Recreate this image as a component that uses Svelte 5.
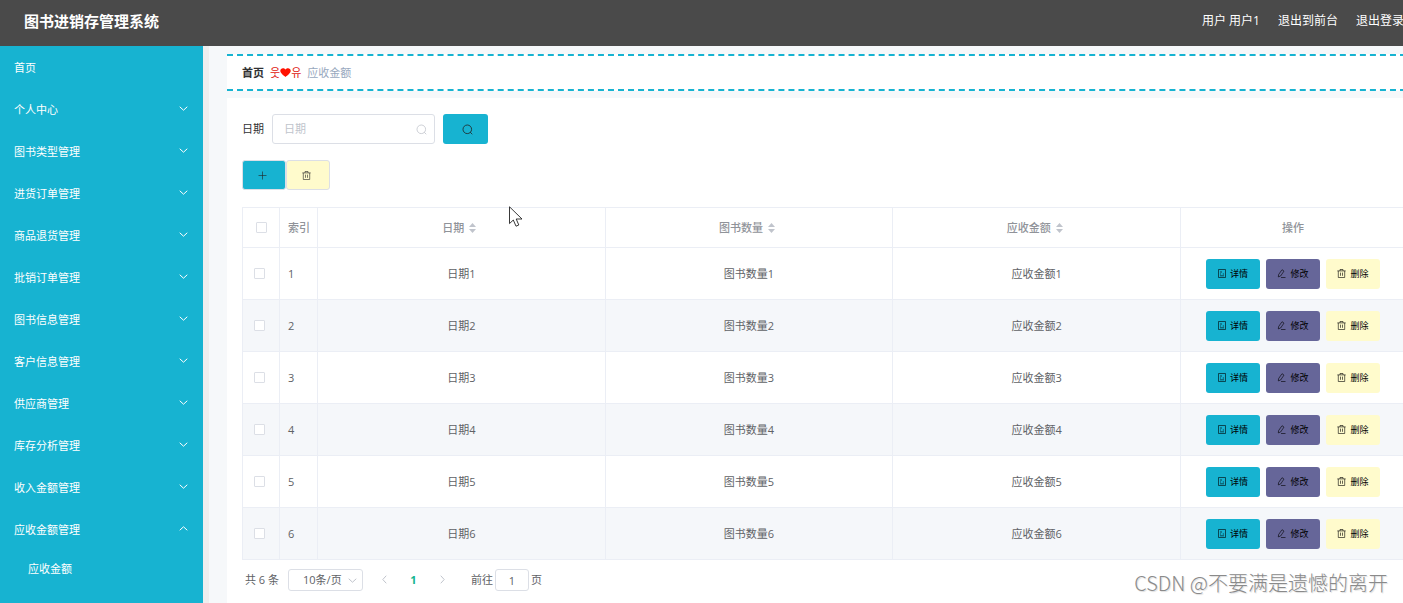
<script>
	const menus = [
		{ name: '首页' },
		{ name: '个人中心', children: [] },
		{ name: '图书类型管理', children: [] },
		{ name: '进货订单管理', children: [] },
		{ name: '商品退货管理', children: [] },
		{ name: '批销订单管理', children: [] },
		{ name: '图书信息管理', children: [] },
		{ name: '客户信息管理', children: [] },
		{ name: '供应商管理', children: [] },
		{ name: '库存分析管理', children: [] },
		{ name: '收入金额管理', children: [] },
		{ name: '应收金额管理', children: ['应收金额'] }
	];
	const columns = ['日期', '图书数量', '应收金额'];
	const rows = [1, 2, 3, 4, 5, 6];

	let opened = $state('应收金额管理');
	let keyword = $state('');
	let selected = $state([]);
	let page = $state('1');

	const toggleMenu = (name) => {
		opened = opened === name ? '' : name;
	};

	const toggleAll = (e) => {
		selected = e.currentTarget.checked ? [...rows] : [];
	};
</script>

{#snippet chevron(dir)}
	<svg class="chevron {dir}" width="9" height="9" viewBox="0 0 9 9" fill="none" aria-hidden="true">
		<path d="M1 3L4.5 6.2L8 3" stroke="currentColor" stroke-linecap="round" />
	</svg>
{/snippet}

{#snippet searchIcon()}
	<svg width="11" height="11" viewBox="0 0 11 11" fill="none" stroke="currentColor" aria-hidden="true">
		<circle cx="5.3" cy="5.3" r="4.3" stroke-width="0.8" />
		<path d="M8.4 8.4L10 10" stroke-width="0.8" stroke-linecap="round" />
	</svg>
{/snippet}

{#snippet trashIcon()}
	<svg width="9" height="9" viewBox="0 0 9 9" fill="none" stroke="currentColor" stroke-width="0.6" aria-hidden="true">
		<path d="M0.3 1.9H8.7M3 1.9V0.5H6V1.9M1.3 1.9V8.5H7.7V1.9M3.5 3.6V6.8M5.5 3.6V6.8" />
	</svg>
{/snippet}

<div class="app">
	<header>
		<h1>图书进销存管理系统</h1>
		<nav class="user">
			<span>用户 用户1</span>
			<a href="#front">退出到前台</a>
			<a href="#logout">退出登录</a>
		</nav>
	</header>

	<div class="body">
		<aside>
			<ul>
				{#each menus as menu}
					<li>
						<button class="menu" onclick={() => toggleMenu(menu.name)}>
							{menu.name}
							{#if menu.children}
								{@render chevron(opened === menu.name ? 'up' : 'down')}
							{/if}
						</button>
						{#if opened === menu.name && menu.children}
							{#each menu.children as child}
								<a class="child" href="#list">{child}</a>
							{/each}
						{/if}
					</li>
				{/each}
			</ul>
		</aside>

		<main>
			<div class="breadcrumb">
				<a href="#home">首页</a>
				<span class="separator">웃<svg width="11" height="9" viewBox="0 0 11 9" aria-hidden="true"><path d="M5.5 9C3.6 7.2 0.3 5.2 0.3 2.7C0.3 0 4 -0.8 5.5 1.6C7 -0.8 10.7 0 10.7 2.7C10.7 5.2 7.4 7.2 5.5 9Z" fill="#f10" /></svg>유</span>
				<span class="current">应收金额</span>
			</div>

			<section class="panel">
				<form class="search" onsubmit={(e) => e.preventDefault()}>
					<label for="date">日期</label>
					<div class="input">
						<input id="date" type="text" placeholder="日期" bind:value={keyword} />
						{@render searchIcon()}
					</div>
					<button class="btn primary" aria-label="查询">{@render searchIcon()}</button>
				</form>

				<div class="tools">
					<button class="btn primary" aria-label="新增">
						<svg width="9" height="9" viewBox="0 0 9 9" stroke="currentColor" stroke-width="0.6" aria-hidden="true">
							<path d="M4.5 0.5V8.5M0.5 4.5H8.5" />
						</svg>
					</button>
					<button class="btn danger" aria-label="删除">{@render trashIcon()}</button>
				</div>

				<table>
					<colgroup>
						<col class="w-check" />
						<col class="w-index" />
						<col />
						<col />
						<col />
						<col class="w-action" />
					</colgroup>
					<thead>
						<tr>
							<th>
								<input type="checkbox" aria-label="全选" checked={selected.length === rows.length} onchange={toggleAll} />
							</th>
							<th class="index">索引</th>
							{#each columns as column}
								<th>
									<span class="sortable">
										{column}
										<svg width="7" height="10" viewBox="0 0 7 10" fill="#c0c4cc" aria-hidden="true">
											<path d="M3.5 0L7 4H0ZM3.5 10L7 6H0Z" />
										</svg>
									</span>
								</th>
							{/each}
							<th>操作</th>
						</tr>
					</thead>
					<tbody>
						{#each rows as row}
							<tr>
								<td class="check"><input type="checkbox" aria-label="选择{row}" value={row} bind:group={selected} /></td>
								<td class="index">{row}</td>
								{#each columns as column}
									<td>{column}{row}</td>
								{/each}
								<td>
									<div class="actions">
										<button class="btn small primary">
											<svg width="8" height="9" viewBox="0 0 8 9" fill="none" stroke="currentColor" stroke-width="0.6" aria-hidden="true">
												<path d="M0.5 0.5H7.5V8.5H0.5ZM2 3H4M2 5H3M4.8 5H6M2 6.8H6" />
											</svg>
											详情
										</button>
										<button class="btn small edit">
											<svg width="9" height="9" viewBox="0 0 9 9" fill="none" stroke="currentColor" stroke-width="0.6" aria-hidden="true">
												<path d="M1.6 5.6L5 0.7L7 2.1L3.6 7L1.3 7.9ZM4 8.5H8.5" />
											</svg>
											修改
										</button>
										<button class="btn small danger">{@render trashIcon()}删除</button>
									</div>
								</td>
							</tr>
						{/each}
					</tbody>
				</table>

				<div class="pagination">
					<span>共 6 条</span>
					<div class="size">
						<select aria-label="每页条数">
							<option>10条/页</option>
							<option>20条/页</option>
						</select>
						{@render chevron('down')}
					</div>
					<button class="pager" aria-label="上一页" disabled>{@render chevron('left')}</button>
					<button class="pager active">1</button>
					<button class="pager" aria-label="下一页" disabled>{@render chevron('right')}</button>
					<label class="jump">前往<input type="text" bind:value={page} />页</label>
				</div>
			</section>
		</main>
	</div>

	<div class="watermark">CSDN @不要满是遗憾的离开</div>
	<svg class="cursor" width="14" height="21" viewBox="0 0 14 21" aria-hidden="true">
		<path d="M0.5 0.8V17.6L4.3 14L7 20.2L9.8 19L7.2 13H13Z" fill="#fff" stroke="#222" stroke-width="0.9" />
	</svg>
</div>

<style>
	:global(body) {
		margin: 0;
		overflow: hidden;
	}

	.app {
		position: relative;
		display: flex;
		flex-direction: column;
		min-height: 100vh;
		overflow: hidden;
		color: #606266;
		background: #f6f8fa;
		font-family: 'Open Sans', 'Noto Sans CJK SC', 'Noto Sans CJK KR', sans-serif;
		font-size: 11px;
		line-height: 16px;
	}

	.app * {
		box-sizing: border-box;
	}

	button,
	input,
	select {
		font: inherit;
		color: inherit;
	}

	button {
		padding: 0;
		border: 0;
		background: none;
		cursor: pointer;
	}

	a {
		color: inherit;
		text-decoration: none;
	}

	svg {
		flex: none;
	}

	header {
		display: flex;
		align-items: center;
		justify-content: space-between;
		height: 46px;
		padding: 0 0 4px 24px;
		color: #fff;
		background: #4a4a4a;
	}

	h1 {
		margin: 0;
		font-size: 15px;
		line-height: 24px;
	}

	.user {
		display: flex;
		gap: 18px;
		margin-right: -1px;
		font-size: 12px;
		white-space: nowrap;
	}

	.body {
		display: flex;
		flex: 1;
	}

	aside {
		flex: none;
		width: 203px;
		color: #fff;
		background: #17b3d1;
	}

	ul {
		margin: 0;
		padding: 1px 0 0;
		list-style: none;
	}

	.menu {
		display: flex;
		align-items: center;
		justify-content: space-between;
		width: 100%;
		height: 42px;
		padding: 0 15px 0 14px;
	}

	.menu .chevron {
		margin-bottom: 4px;
	}

	.child {
		display: flex;
		align-items: center;
		height: 36px;
		padding-left: 28px;
	}

	.up {
		transform: rotate(180deg);
	}

	.left {
		transform: rotate(90deg);
	}

	.right {
		transform: rotate(-90deg);
	}

	main {
		display: flex;
		flex: 1;
		flex-direction: column;
		gap: 7px;
		min-width: 0;
		margin-right: -3px;
		padding: 8px 0 0 18px;
		border-left: 6px solid #eee;
	}

	.breadcrumb {
		display: flex;
		align-items: center;
		gap: 6px;
		height: 37px;
		padding: 0 15px;
		border: dashed #17b3d1;
		border-width: 2px 0;
		background: #fff;
	}

	.breadcrumb a {
		color: #303133;
		font-weight: bold;
	}

	.separator {
		display: flex;
		align-items: center;
		color: #e02010;
	}

	.current {
		color: #97a8be;
	}

	.panel {
		flex: 1;
		padding: 16px 0 12px 15px;
		background: #fff;
	}

	.search {
		display: flex;
		align-items: center;
		gap: 8px;
		color: #303133;
	}

	.input {
		display: flex;
		align-items: center;
		width: 163px;
		height: 30px;
		padding: 0 7px 0 11px;
		border: 1px solid #dcdfe6;
		border-radius: 3px;
		color: #c0c4cc;
	}

	.input input {
		flex: 1;
		min-width: 0;
		padding: 0;
		border: 0;
		outline: none;
		color: #606266;
	}

	input::placeholder {
		color: #c0c4cc;
	}

	.btn {
		display: flex;
		align-items: center;
		justify-content: center;
		width: 44px;
		height: 30px;
		border-radius: 3px;
		color: #222;
	}

	.search .btn {
		width: 45px;
		padding-left: 3px;
	}

	.tools {
		display: flex;
		margin: 16px 0 17px;
	}

	.tools .btn {
		padding-right: 4px;
		border: 1px solid #dcdfe6;
	}

	.primary {
		background: #17b3d1;
	}

	.edit {
		background: #666699;
	}

	.danger {
		background: #fffbcc;
	}

	.btn.small {
		gap: 4px;
		width: 54px;
		font-size: 9px;
		color: #000;
	}

	table {
		width: 100%;
		border: solid #ebeef5;
		border-width: 1px 0 0 1px;
		border-spacing: 0;
		table-layout: fixed;
	}

	.w-check {
		width: 37px;
	}

	.w-index {
		width: 38px;
	}

	.w-action {
		width: 225px;
	}

	th,
	td {
		padding: 0;
		border: solid #ebeef5;
		border-width: 0 1px 1px 0;
		text-align: center;
	}

	th {
		height: 40px;
		color: #909399;
		font-weight: 500;
	}

	td {
		height: 52px;
	}

	.check {
		padding-right: 3px;
	}

	.index {
		padding-left: 8px;
		text-align: left;
	}

	tbody tr:nth-child(even) {
		background: #f5f7fa;
	}

	input[type='checkbox'] {
		display: block;
		width: 11px;
		height: 11px;
		margin: 0 auto;
		appearance: none;
		border: 1px solid #dcdfe6;
		border-radius: 1px;
		background: #fff;
	}

	input[type='checkbox']:checked {
		border-color: #17b3d1;
		background: #17b3d1;
	}

	.sortable {
		display: inline-flex;
		align-items: center;
		gap: 5px;
		padding-right: 4px;
	}

	.actions {
		display: flex;
		justify-content: center;
		gap: 6px;
	}

	.pagination {
		display: flex;
		align-items: center;
		padding: 9px 0 0 3px;
	}

	.size {
		display: flex;
		align-items: center;
		width: 75px;
		height: 22px;
		margin: 0 7px 0 9px;
		padding: 0 5px 0 14px;
		border: 1px solid #dcdfe6;
		border-radius: 3px;
	}

	.size select {
		flex: 1;
		min-width: 0;
		padding: 0;
		border: 0;
		outline: none;
		appearance: none;
		background: none;
	}

	.size .chevron,
	.pager:disabled {
		color: #c0c4cc;
	}

	.pager {
		width: 29px;
		height: 22px;
	}

	.active {
		color: #12b58f;
		font-weight: bold;
	}

	.jump {
		display: flex;
		align-items: center;
		gap: 2px;
		margin-left: 14px;
	}

	.jump input {
		width: 34px;
		height: 22px;
		padding: 0;
		border: 1px solid #dcdfe6;
		border-radius: 3px;
		text-align: center;
	}

	.watermark {
		position: absolute;
		right: 15px;
		bottom: 6px;
		color: #8a8a8a;
		font-family: 'Noto Sans CJK SC', sans-serif;
		font-size: 20px;
		font-weight: 300;
		line-height: 28px;
		text-shadow: 1px 1px 1px #ddd;
	}

	.cursor {
		position: absolute;
		top: 206px;
		left: 509px;
	}
</style>
